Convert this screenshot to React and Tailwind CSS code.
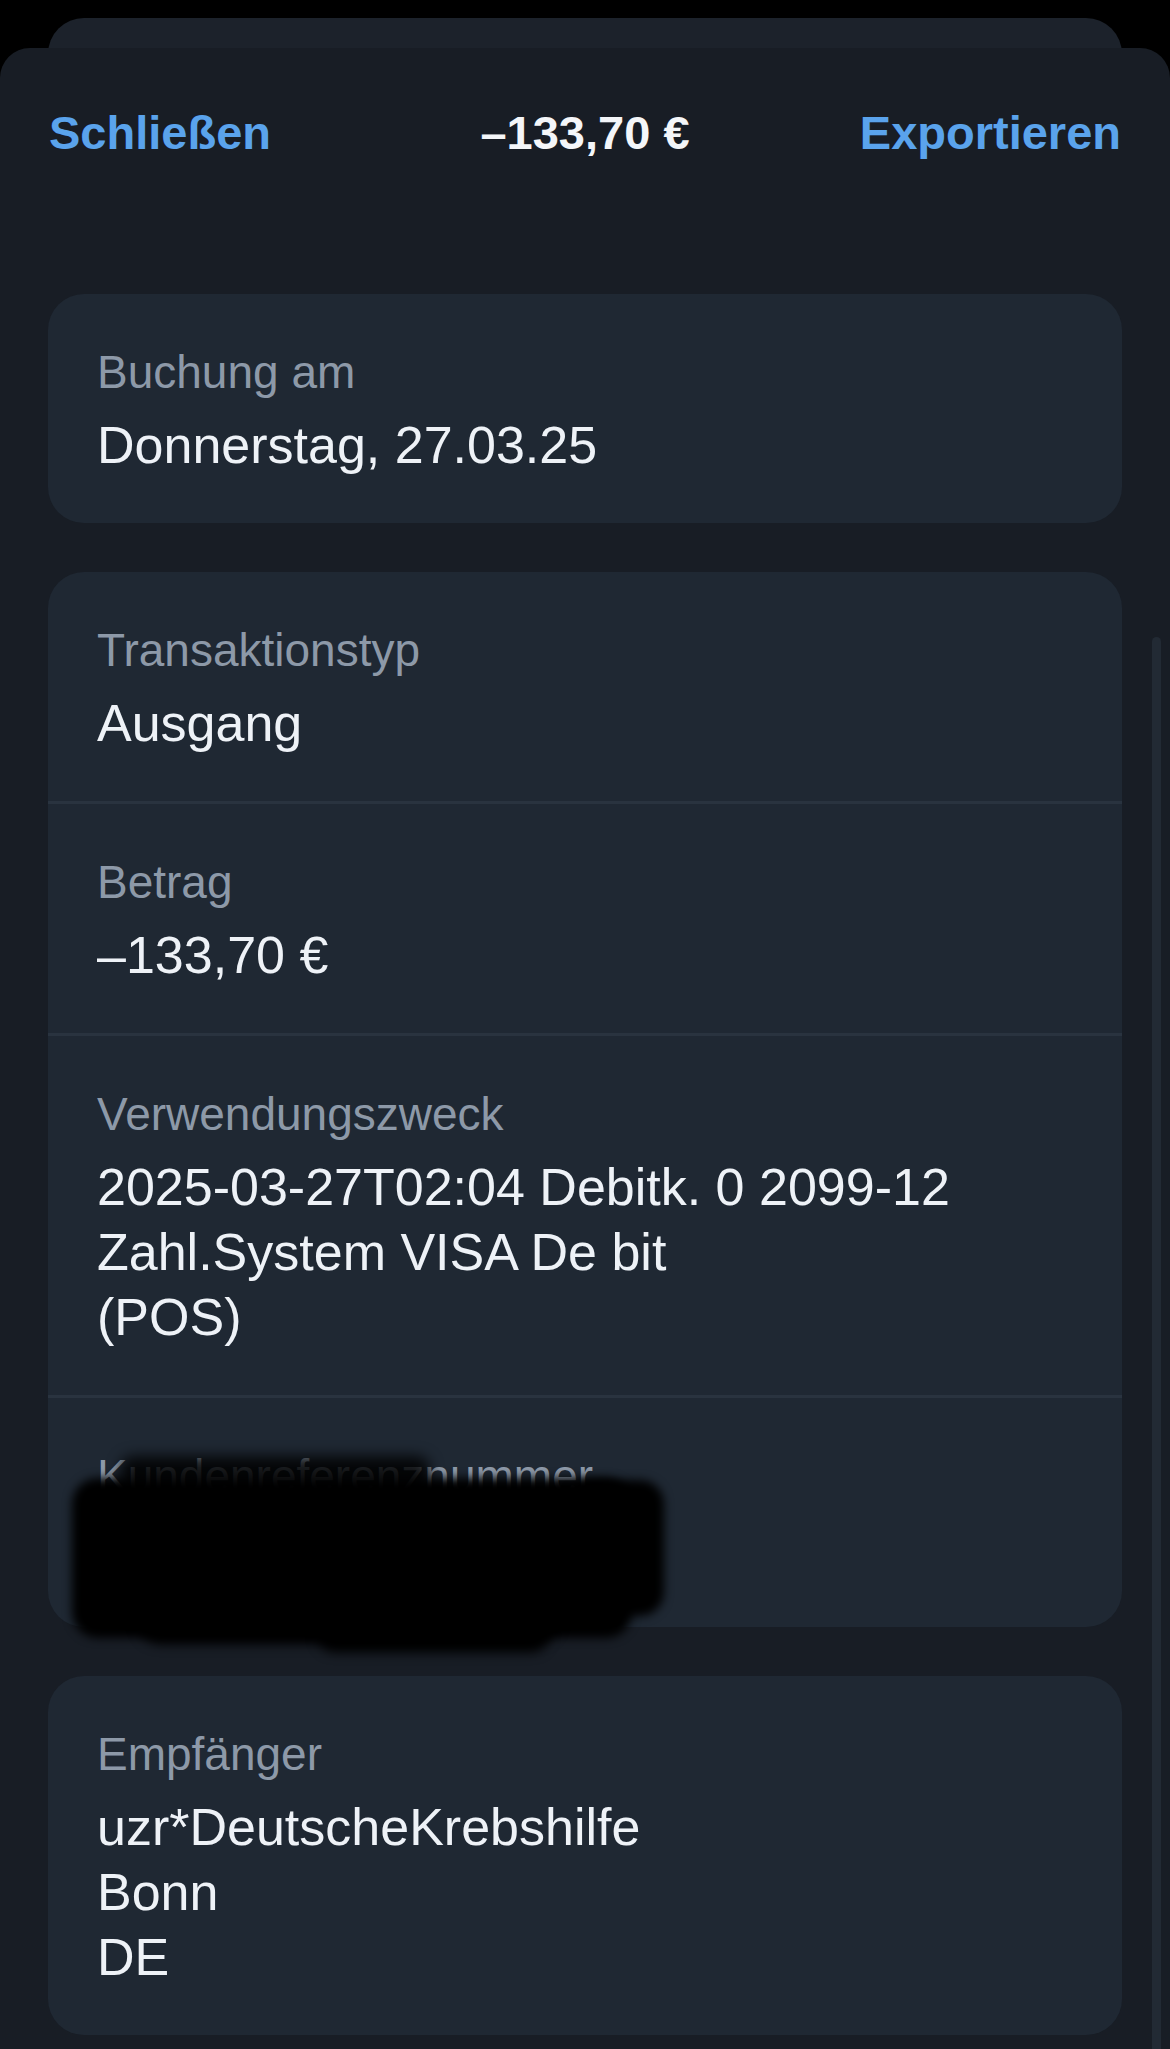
const rows = [
  { label: 'Transaktionstyp', lines: ['Ausgang'] },
  { label: 'Betrag', lines: ['–133,70 €'] },
  {
    label: 'Verwendungszweck',
    lines: ['2025-03-27T02:04 Debitk. 0 2099-12', 'Zahl.System VISA De bit', '(POS)'],
  },
];

const Field = ({ label, lines, children }) => (
  <div className="relative px-[49px] pt-[51px] pb-[45px]">
    <div className="text-[46px] leading-[54px] text-[#8d99a8]">{label}</div>
    <div className="mt-[14px] text-[52px] leading-[65px] text-[#eef2f7]">
      {lines ? lines.map((line) => <div key={line}>{line}</div>) : <div className="h-[65px]" />}
    </div>
    {children}
  </div>
);

const Divider = () => <div className="h-[3px] bg-[#29333f]" />;

// black marker scribble over the reference number
const Redaction = () => (
  <div className="pointer-events-none absolute inset-0">
    <div className="absolute left-[72px] top-[58px] h-[34px] w-[310px] rounded-[14px] bg-black/85 blur-[7px]" />
    <div className="absolute left-[24px] top-[80px] h-[160px] w-[560px] rounded-[26px] bg-black blur-[5px]" />
    <div className="absolute left-[520px] top-[82px] h-[136px] w-[96px] rounded-[24px] bg-black blur-[5px]" />
    <div className="absolute left-[90px] top-[200px] h-[46px] w-[420px] rounded-[24px] bg-black blur-[6px]" />
    <div className="absolute left-[270px] top-[220px] h-[34px] w-[230px] rounded-[20px] bg-black blur-[6px]" />
  </div>
);

const App = () => {
  return (
    <div className="relative h-[2049px] w-[1170px] overflow-hidden bg-black font-['Liberation_Sans',Arial,sans-serif]">
      <div className="mx-[48px] mt-[18px] h-[60px] rounded-t-[36px] bg-[#1c222b]" />

      <div className="-mt-[30px] h-[2040px] rounded-t-[30px] bg-[#181d25] px-[48px]">
        <div className="-mx-[48px] grid h-[170px] grid-cols-3 items-center px-[49px] text-[47px] font-bold">
          <button type="button" className="justify-self-start text-[#5aa3ec]">
            Schließen
          </button>
          <div className="text-center text-[#f4f6f9]">–133,70 €</div>
          <button type="button" className="justify-self-end text-[#5aa3ec]">
            Exportieren
          </button>
        </div>

        <div className="mt-[76px] flex flex-col gap-[49px]">
          <div className="rounded-[36px] bg-[#1f2833]">
            <Field label="Buchung am" lines={['Donnerstag, 27.03.25']} />
          </div>

          <div className="rounded-[36px] bg-[#1f2833]">
            {rows.map((row) => (
              <div key={row.label}>
                <Field label={row.label} lines={row.lines} />
                <Divider />
              </div>
            ))}
            <Field label="Kundenreferenznummer">
              <Redaction />
            </Field>
          </div>

          <div className="rounded-[36px] bg-[#1f2833]">
            <Field label="Empfänger" lines={['uzr*DeutscheKrebshilfe', 'Bonn', 'DE']} />
          </div>
        </div>
      </div>

      <div className="absolute right-[9px] top-[637px] h-[1500px] w-[9px] rounded-full bg-[#222a34]" />
    </div>
  );
};

export default App;
